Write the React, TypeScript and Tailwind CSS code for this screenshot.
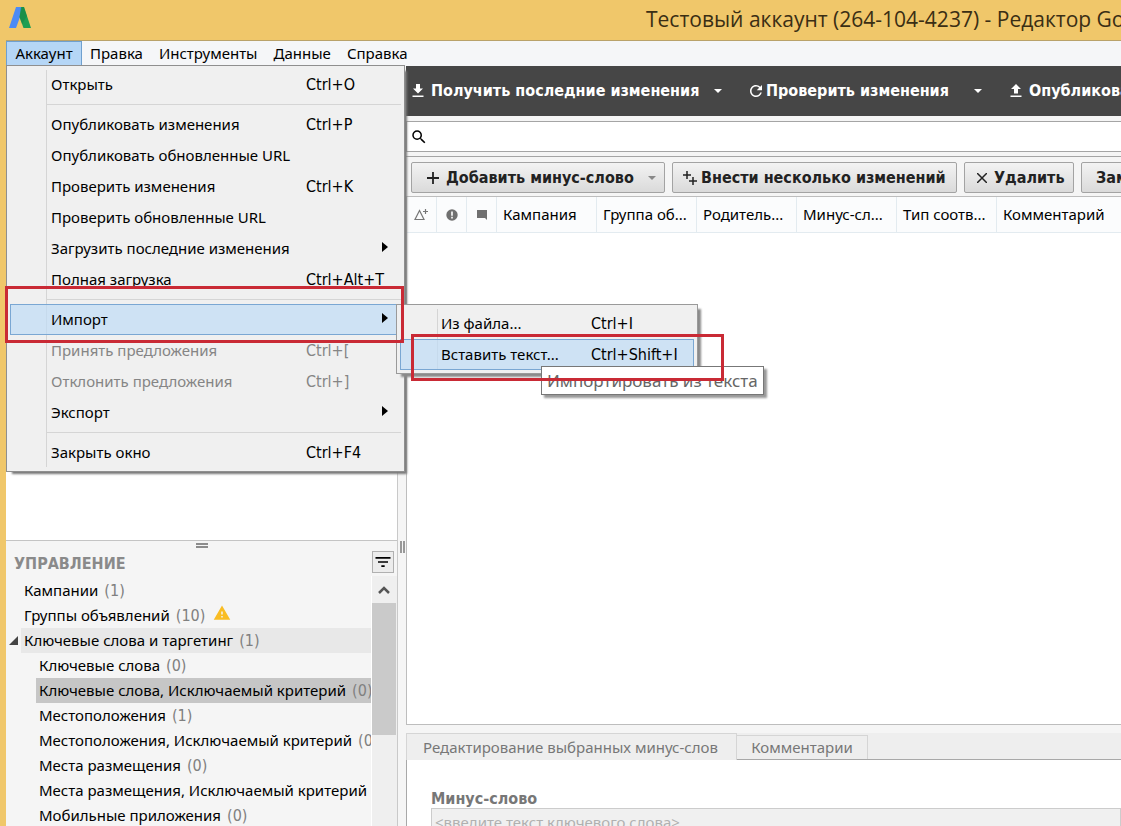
import React, { useState } from 'react';
import clsx from 'clsx';
import { MdFilterList, MdRefresh, MdSearch, MdWarning } from 'react-icons/md';

type MenuEntry = {
  label: string;
  keys?: string;
  arrow?: boolean;
  disabled?: boolean;
  active?: boolean;
  submenu?: MenuEntry[];
};

// null is a separator line
const accountMenu: (MenuEntry | null)[] = [
  { label: 'Открыть', keys: 'Ctrl+O' },
  null,
  { label: 'Опубликовать изменения', keys: 'Ctrl+P' },
  { label: 'Опубликовать обновленные URL' },
  { label: 'Проверить изменения', keys: 'Ctrl+K' },
  { label: 'Проверить обновленные URL' },
  { label: 'Загрузить последние изменения', arrow: true },
  { label: 'Полная загрузка', keys: 'Ctrl+Alt+T' },
  null,
  {
    label: 'Импорт',
    arrow: true,
    active: true,
    submenu: [
      { label: 'Из файла...', keys: 'Ctrl+I' },
      { label: 'Вставить текст...', keys: 'Ctrl+Shift+I', active: true },
    ],
  },
  { label: 'Принять предложения', keys: 'Ctrl+[', disabled: true },
  { label: 'Отклонить предложения', keys: 'Ctrl+]', disabled: true },
  { label: 'Экспорт', arrow: true },
  null,
  { label: 'Закрыть окно', keys: 'Ctrl+F4' },
];

const otherMenus = ['Правка', 'Инструменты', 'Данные', 'Справка'];

const treeTop = [
  { label: 'Кампании', count: 1 },
  { label: 'Группы объявлений', count: 10, warning: true },
];

const treeChildren = [
  { label: 'Ключевые слова', count: 0 },
  { label: 'Ключевые слова, Исключаемый критерий', count: 0 },
  { label: 'Местоположения', count: 1 },
  { label: 'Местоположения, Исключаемый критерий', count: 0 },
  { label: 'Места размещения', count: 0 },
  { label: 'Места размещения, Исключаемый критерий', count: 0 },
  { label: 'Мобильные приложения', count: 0 },
];

const columns = ['Кампания', 'Группа об...', 'Родитель...', 'Минус-сл...', 'Тип соотв...'];

const wideFont = "font-['DejaVu_Sans_Condensed','Noto_Sans',sans-serif] text-base";

function Logo() {
  return (
    <svg className="h-6 w-6" viewBox="0 0 24 24">
      <path d="M8 1h6l1 2-7 19H1z" fill="#4c8bf5" />
      <path d="M13 1h3l7 21h-7.500L11.500 11z" fill="#1e9e52" />
      <path d="M14 1h2l3 9-5 8-2.500-7z" fill="#17803f" opacity="0.500" />
    </svg>
  );
}

function DownloadIcon({ up = false }: { up?: boolean }) {
  return (
    <svg className="h-3.5 w-3" viewBox="0 0 12 14" fill="currentColor">
      {up ? <path d="M4 9.500V5H1l5-5 5 5H8v4.500z" /> : <path d="M4 0h4v4.500h3l-5 5-5-5h3z" />}
      <path d="M.5 11.500h11v1.500H.5z" />
    </svg>
  );
}

function Caret() {
  return (
    <svg className="h-1 w-2" viewBox="0 0 8 4" fill="currentColor">
      <path d="M0 0h8L4 4z" />
    </svg>
  );
}

function MenuRow({ item, labelWidth }: { item: MenuEntry; labelWidth: string }) {
  return (
    <li className="relative">
      <button
        disabled={item.disabled}
        className={clsx(
          'flex h-[31px] w-full items-center border pl-10 text-left whitespace-nowrap',
          item.active ? 'border-[#7aa7d3] bg-[#bfdcf5]/70' : 'border-transparent',
          item.disabled ? 'text-[#858585]' : 'text-black',
        )}
      >
        <span className={labelWidth}>{item.label}</span>
        <span className={clsx('flex-1', wideFont)}>{item.keys}</span>
        {item.arrow && (
          <svg className="mr-3 mb-1 h-2.5 w-1.5" viewBox="0 0 6 10">
            <path d="M0 0l6 5-6 5z" />
          </svg>
        )}
      </button>
      {item.submenu && (
        <ul className="absolute top-0 left-[386px] z-10 w-[302px] border border-[#9a9a9a] bg-[#f0f0f0] p-[3px] shadow-[4px_4px_2px_-1px_#8a8a8a]">
          <li className="absolute inset-y-1 left-10 border-l border-[#d5d5d5]" aria-hidden="true" />
          {item.submenu.map((sub) => (
            <MenuRow key={sub.label} item={sub} labelWidth="w-[150px]" />
          ))}
        </ul>
      )}
    </li>
  );
}

function AccountMenu() {
  return (
    <ul className="absolute top-full left-0 z-20 -mt-px w-[399px] border border-[#8f8f8f] bg-[#f0f0f0] p-[3px] shadow-[4px_4px_2px_-2px_#777]">
      <li className="absolute inset-y-1 left-[39px] border-l border-[#d5d5d5]" aria-hidden="true" />
      {accountMenu.map((item, i) =>
        item ? (
          <MenuRow key={item.label} item={item} labelWidth="w-[255px]" />
        ) : (
          <li key={i} className="flex h-[9px] items-center pl-9">
            <hr className="w-full border-[#d5d5d5]" />
          </li>
        ),
      )}
    </ul>
  );
}

function MenuBar() {
  const [open, setOpen] = useState(true);

  return (
    <nav className="flex h-[26px] shrink-0 border-t border-[#b9a26a] bg-[#f5f6f8]">
      <div className="relative">
        <button
          onClick={() => setOpen(!open)}
          className="h-[25px] w-[76px] border border-[#6fa0cf] bg-[#b5d6f6]"
        >
          Аккаунт
        </button>
        {open && <AccountMenu />}
      </div>
      {otherMenus.map((name) => (
        <button key={name} className="h-[25px] px-2">
          {name}
        </button>
      ))}
    </nav>
  );
}

function TreeLabel({ label, count }: { label: string; count: number }) {
  return (
    <span className="flex h-[25px] items-center">
      {label}
      <span className={clsx('ml-1.5 text-[#808080]', wideFont)}>({count})</span>
    </span>
  );
}

function Sidebar() {
  const [selected, setSelected] = useState(1);

  return (
    <aside className="flex w-[392px] shrink-0 flex-col border-r border-[#c9c9c9] bg-[#f5f5f5]">
      <div className="h-[475px] shrink-0 border-b border-[#c4c4c4] bg-white" />
      <div className="flex h-[9px] shrink-0 items-center justify-center">
        <div className="h-[5px] w-3 border-y-2 border-[#8c8c8c]" />
      </div>
      <div className="flex h-[26px] shrink-0 items-center justify-between pr-[3px] pl-2">
        <h2 className={clsx('pt-0.5 font-bold text-[#8a8a8a]', wideFont)}>УПРАВЛЕНИЕ</h2>
        <button
          aria-label="Фильтр"
          className="mb-0.5 flex h-[22px] w-[22px] items-center justify-center border border-[#b0b0b0] bg-[#ececec]"
        >
          <MdFilterList className="h-5 w-5" />
        </button>
      </div>
      <div className="flex min-h-0 flex-1">
        <ul className="min-w-0 flex-1 overflow-hidden pt-0.5 whitespace-nowrap">
          {treeTop.map((row) => (
            <li key={row.label}>
              <button className="flex h-[25px] w-full items-center pl-[18px]">
                <TreeLabel label={row.label} count={row.count} />
                {row.warning && <MdWarning className="mb-1.5 ml-2 h-[18px] w-[18px] text-[#f9bd24]" />}
              </button>
            </li>
          ))}
          <li>
            <div className="flex h-[25px] items-center">
              <svg className="mx-[3px] h-[9px] w-[9px]" viewBox="0 0 9 9">
                <path d="M9 0v9H0z" fill="#444" />
              </svg>
              <button className="h-full flex-1 bg-[#e8e8e8] pl-[3px] text-left">
                <TreeLabel label="Ключевые слова и таргетинг" count={1} />
              </button>
            </div>
            <ul className="pl-[30px]">
              {treeChildren.map((row, i) => (
                <li key={row.label}>
                  <button
                    onClick={() => setSelected(i)}
                    className={clsx(
                      'block h-[25px] w-full pl-[3px] text-left',
                      i === selected && 'bg-[#c6c6c6]',
                    )}
                  >
                    <TreeLabel label={row.label} count={row.count} />
                  </button>
                </li>
              ))}
            </ul>
          </li>
        </ul>
        <div className="flex w-[26px] flex-col border-l border-white bg-[#efefef] pr-px">
          <div className="flex h-[27px] items-center justify-center">
            <svg className="h-2 w-3" viewBox="0 0 12 8" fill="none" stroke="#555" strokeWidth="2.500">
              <path d="M1 7l5-5 5 5" />
            </svg>
          </div>
          <div className="h-[132px] bg-[#cacaca]" />
        </div>
      </div>
    </aside>
  );
}

const darkButton = 'flex shrink-0 items-center gap-[7px]';
const toolButton =
  'flex h-[31px] shrink-0 items-center rounded-xs border border-[#a3a3a3] bg-linear-to-b from-[#f3f3f3] to-[#dadada] whitespace-nowrap';

function Toolbars() {
  return (
    <>
      <div
        className={clsx(
          'flex h-[50px] shrink-0 items-center bg-[#464646] pl-1.5 font-bold whitespace-nowrap text-white',
          wideFont,
        )}
      >
        <button className={clsx(darkButton, 'w-[302px]')}>
          <DownloadIcon />
          Получить последние изменения
        </button>
        <button aria-label="Варианты загрузки" className="w-[33px] shrink-0">
          <Caret />
        </button>
        <button className={clsx(darkButton, 'w-[227px] gap-px')}>
          <MdRefresh className="h-[18px] w-[18px]" />
          Проверить изменения
        </button>
        <button aria-label="Варианты проверки" className="w-9 shrink-0">
          <Caret />
        </button>
        <button className={darkButton}>
          <DownloadIcon up />
          Опубликовать
        </button>
      </div>
      <label className="mt-[5px] flex h-[31px] shrink-0 items-center border border-r-0 border-[#a5a5a5] bg-white pl-[3px]">
        <MdSearch className="h-[18px] w-[18px]" />
        <input aria-label="Поиск" className="h-full flex-1 px-2 outline-none" />
      </label>
      <div
        className={clsx(
          'mt-1 flex h-10 shrink-0 items-center gap-[7px] border-t border-[#a5a5a5] pt-0.5 pl-[5px] font-bold text-[#222]',
          wideFont,
        )}
      >
        <button className={clsx(toolButton, 'w-[254px] pl-[15px]')}>
          <svg className="mr-[7px] h-3 w-3" viewBox="0 0 12 12" stroke="#222" strokeWidth="1.800">
            <path d="M6 0v12M0 6h12" />
          </svg>
          Добавить минус-слово
          <span className="mr-2 ml-auto text-[#888]">
            <Caret />
          </span>
        </button>
        <button className={clsx(toolButton, 'w-[285px] pl-2.5')}>
          <svg className="mr-1 h-3.5 w-3.5" viewBox="0 0 14 14" stroke="#222" strokeWidth="1.500">
            <path d="M4 0v8M0 4h8M10 6v8M6 10h8" />
          </svg>
          Внести несколько изменений
        </button>
        <button className={clsx(toolButton, 'w-[110px] pl-3')}>
          <svg className="mr-[7px] h-2.5 w-2.5" viewBox="0 0 10 10" stroke="#222" strokeWidth="1.500">
            <path d="M0 0l10 10M10 0L0 10" />
          </svg>
          Удалить
        </button>
        <button className={clsx(toolButton, 'px-3.5')}>Заменить текст</button>
      </div>
    </>
  );
}

function KeywordTable() {
  const cell = 'h-[36px] border-r border-b border-[#e3ebf0] p-0';

  return (
    <div className="min-h-0 flex-1 border-y border-l border-[#bdbdbd] bg-white">
      <table className="w-full table-fixed border-separate border-spacing-0 bg-[#fbfcfd] text-left">
        <thead>
          <tr>
            <th className={clsx(cell, 'w-[30px]')} aria-label="Изменения">
              <svg className="ml-[7px] h-3 w-3.5" viewBox="0 0 14 12" fill="none" stroke="#777" strokeWidth="1.200">
                <path d="M5.500 1.500l4.500 9H1zM11.500 0v5M9 2.500h5" />
              </svg>
            </th>
            <th className={clsx(cell, 'w-[30px]')} aria-label="Ошибки">
              <svg className="mx-auto h-3 w-3" viewBox="0 0 12 12">
                <circle cx="6" cy="6" r="5.700" fill="#707070" />
                <path d="M5.200 2.500h1.600v4.200H5.200zM5.200 7.800h1.600v1.600H5.200z" fill="#fff" />
              </svg>
            </th>
            <th className={clsx(cell, 'w-[30px]')} aria-label="Заметки">
              <svg className="mx-auto h-2.5 w-2.5" viewBox="0 0 10 10">
                <path d="M0 0h10v10L8 8H0z" fill="#707070" />
              </svg>
            </th>
            {columns.map((name) => (
              <th key={name} className={clsx(cell, 'w-[100px] pl-1.5 font-normal whitespace-nowrap')}>
                {name}
              </th>
            ))}
            <th className="h-[36px] border-b border-[#e3ebf0] p-0 pl-1.5 font-normal">Комментарий</th>
          </tr>
        </thead>
      </table>
    </div>
  );
}

function EditPanel() {
  return (
    <section className="mt-2 h-[93px] shrink-0 overflow-hidden text-[#777]">
      <div className="flex h-[27px] items-end bg-[#eee]">
        <button className="h-[27px] w-[331px] border border-b-0 border-[#d5d5d5] pl-4 text-left whitespace-nowrap">
          Редактирование выбранных минус-слов
        </button>
        <div className="flex h-full flex-1 items-end border-b border-[#a8a8a8]">
          <button className="h-6 w-[131px] border-t border-r border-[#d5d5d5] text-center">Комментарии</button>
        </div>
      </div>
      <div className="border-l border-[#a8a8a8] bg-white pt-[27px] pb-4 pl-6">
        <label htmlFor="negative" className={clsx('block h-[21px] font-bold', wideFont)}>
          Минус-слово
        </label>
        <input
          id="negative"
          placeholder="<введите текст ключевого слова>"
          className="h-[27px] w-full border border-[#ccc] bg-[#f0f0f0] pl-[3px] placeholder:text-[#b0b0b0]"
        />
      </div>
    </section>
  );
}

export default function App() {
  return (
    <div className="relative flex h-screen flex-col overflow-hidden bg-[#f0c76a] pl-1.5 font-['Noto_Sans',sans-serif] text-[15px] text-black">
      <header className="flex h-10 shrink-0 items-center">
        <div className="w-[640px] shrink-0 pb-1 pl-0.5">
          <Logo />
        </div>
        <h1 className="font-['Open_Sans','Noto_Sans',sans-serif] text-[21px] whitespace-nowrap text-[#3a2e14]">
          Тестовый аккаунт (264-104-4237) - Редактор Google AdWords
        </h1>
      </header>
      <MenuBar />
      <div className="flex min-h-0 flex-1 bg-[#f5f5f5]">
        <Sidebar />
        <div className="flex w-2 shrink-0 flex-col items-center pt-[475px]">
          <div className="h-3 w-[5px] border-x-2 border-[#999]" />
        </div>
        <main className="flex min-w-0 flex-1 flex-col">
          <Toolbars />
          <KeywordTable />
          <EditPanel />
        </main>
      </div>
      <div
        role="tooltip"
        className="absolute top-[366px] left-[541px] z-30 flex h-[29px] items-center border border-[#777] bg-white px-[5px] text-[17px] text-[#666] shadow-[3px_3px_2px_#999]"
      >
        Импортировать из текста
      </div>
      <div className="pointer-events-none absolute top-[286px] left-[5px] z-40 h-[57px] w-[399px] border-3 border-[#c92a35]" />
      <div className="pointer-events-none absolute top-[334px] left-[411px] z-40 h-[47px] w-[313px] border-3 border-[#c92a35]" />
    </div>
  );
}
